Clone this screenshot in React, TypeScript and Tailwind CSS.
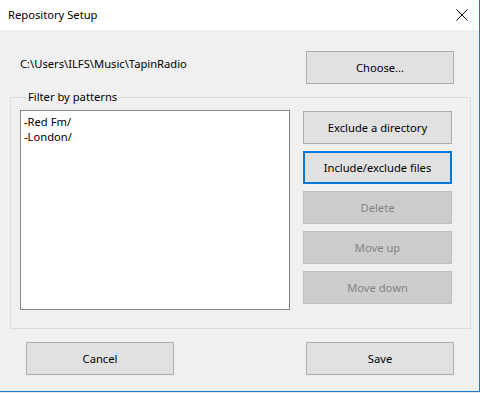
import React from 'react';

function WinButton({
  label,
  disabled,
  focused,
  className = '',
}: {
  label: string;
  disabled?: boolean;
  focused?: boolean;
  className?: string;
}) {
  const base = 'h-[33px] flex items-center justify-center text-[11.2px] leading-none';
  const look = disabled
    ? 'bg-[#cccccc] border border-[#bfbfbf] text-[#838383]'
    : focused
      ? 'bg-[#e1e1e1] border-2 border-[#0078d7] text-black'
      : 'bg-[#e1e1e1] border border-[#adadad] text-black';
  return <div className={`${base} ${look} ${className}`}>{label}</div>;
}

export default function App() {
  return (
    <div className="w-[480px] h-[393px] bg-[#e9e9e9] font-['Noto_Sans',sans-serif] text-black">
      <div className="w-[480px] h-[392px] bg-[#f0f0f0] border-r border-b border-[#1c79cf] flex flex-col">
        {/* Title bar */}
        <div className="h-[30px] shrink-0 bg-white flex items-center justify-between pl-[8px] pr-[9px]">
          <span className="text-[11.2px] leading-none">Repository Setup</span>
          <svg width="12" height="12" viewBox="0 0 12 12" className="mr-[2px]">
            <path d="M0.5 0.5 L11.5 11.5 M11.5 0.5 L0.5 11.5" stroke="#000" strokeWidth="1" />
          </svg>
        </div>

        {/* Path row */}
        <div className="flex items-start justify-between pl-[20px] pr-[25px] mt-[21px]">
          <span className="text-[11.2px] leading-none mt-[7px]">C:\Users\ILFS\Music\TapinRadio</span>
          <WinButton label="Choose..." className="w-[148px]" />
        </div>

        {/* Group box */}
        <fieldset className="mx-[10px] mt-[5px] h-[240px] border border-[#dcdcdc] pl-[9px] pr-[18px]">
          <legend className="ml-[6px] px-[2px] text-[11.2px] leading-[16px]">Filter by patterns</legend>
          <div className="flex gap-[13px] mt-[5px]">
            <div className="w-[270px] h-[200px] bg-white border border-[#828790] px-[3px] pt-[3px] text-[11.2px] leading-[15px]">
              <div>-Red Fm/</div>
              <div>-London/</div>
            </div>
            <div className="w-[149px] flex flex-col gap-[7px] pt-[1px]">
              <WinButton label="Exclude a directory" />
              <WinButton label="Include/exclude files" focused />
              <WinButton label="Delete" disabled />
              <WinButton label="Move up" disabled />
              <WinButton label="Move down" disabled />
            </div>
          </div>
        </fieldset>

        {/* Bottom buttons */}
        <div className="flex justify-between pl-[26px] pr-[25px] mt-[13px]">
          <WinButton label="Cancel" className="w-[148px]" />
          <WinButton label="Save" className="w-[148px]" />
        </div>
      </div>
    </div>
  );
}
